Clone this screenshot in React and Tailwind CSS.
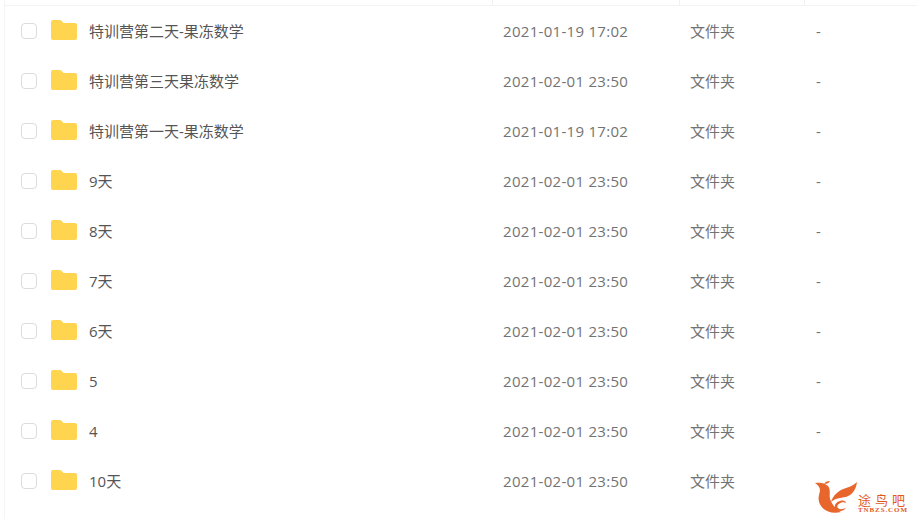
const ROWS = [
  { name: "特训营第二天-果冻数学", time: "2021-01-19 17:02" },
  { name: "特训营第三天果冻数学", time: "2021-02-01 23:50" },
  { name: "特训营第一天-果冻数学", time: "2021-01-19 17:02" },
  { name: "9天", time: "2021-02-01 23:50" },
  { name: "8天", time: "2021-02-01 23:50" },
  { name: "7天", time: "2021-02-01 23:50" },
  { name: "6天", time: "2021-02-01 23:50" },
  { name: "5", time: "2021-02-01 23:50" },
  { name: "4", time: "2021-02-01 23:50" },
  { name: "10天", time: "2021-02-01 23:50" },
];

function FolderIcon() {
  return (
    <svg width="26" height="20" viewBox="0 0 26 20" className="shrink-0">
      <path d="M0 2a2 2 0 0 1 2-2h6.5c1 0 1.6.4 2.2 1.1L12.5 3H24a2 2 0 0 1 2 2v13a2 2 0 0 1-2 2H2a2 2 0 0 1-2-2z" fill="#ffd44f" />
    </svg>
  );
}

// watermark sits over the table's last row, white patch hides what is under it
function Logo() {
  return (
    <div className="absolute left-[810px] top-[470px] flex h-[49px] w-[107px] items-start bg-white pt-[8px]">
      <svg width="48" height="40" viewBox="0 0 48 40" className="shrink-0">
        <path d="M5 5c5-1 10 0 13 3 3 4 1 8 2 13 2 6 6 10 11 13-8 2-16 0-20-6-4-6-2-11-1-15C10 9 8 7 5 5z" fill="#e8652c" />
        <path d="M14 6c1-2 3-3 6-3-1 2-3 3-6 3z" fill="#e8652c" />
        <path d="M21 24c2-7 8-12 15-14 4-1 8-3 11-6-1 8-5 13-11 15-6 1-11 1-15 5z" fill="#e8652c" />
        <path d="M36 30c-3 4-9 4-11 0-1-3 1-6 5-7 3-1 6 0 6 2-2-1-5-1-7 1-2 1-2 3-1 4 2 2 5 1 8 0z" fill="#e8652c" />
      </svg>
      <div className="mt-[15px] flex flex-col text-[#e2591f]">
        <span className="h-[13px] text-[13px] leading-[13px] tracking-[4px] font-['Noto_Sans_CJK_SC',sans-serif]">途鸟吧</span>
        <span className="mt-[1px] h-[6px] text-[7px] leading-[6px] font-bold tracking-[0.9px] font-['Liberation_Serif',serif]">TNBZS.COM</span>
      </div>
    </div>
  );
}

export default function App() {
  return (
    <div className="relative h-[519px] w-[917px] overflow-hidden bg-white font-['Open_Sans','Noto_Sans_CJK_SC',sans-serif] text-[15px] text-[#666]">
      <div className="ml-[4px] h-full border-l border-[#f5f5f5]">
        <div className="flex h-[6px] border-b border-[#f3f3f3]">
          <div className="w-[488px] border-r border-[#f0f0f0]" />
          <div className="w-[187px] border-r border-[#f0f0f0]" />
          <div className="w-[125px] border-r border-[#f0f0f0]" />
        </div>
        {ROWS.map((row) => (
          <div key={row.name} className="flex h-[50px] items-center pb-[2px]">
            <div className="flex w-[498px] items-center">
              <div className="ml-[16px] mt-[2px] h-[16px] w-[16px] rounded-[4px] border border-[#dcdcdc] bg-white" />
              <div className="ml-[14px]"><FolderIcon /></div>
              <span className="ml-[12px] pt-[2px] text-[#555]">{row.name}</span>
            </div>
            <span className="w-[187px] pt-[2px] tracking-[0.3px] text-[#737373]">{row.time}</span>
            <span className="w-[126px] pt-[2px] text-[#737373]">文件夹</span>
            <span className="pt-[2px] text-[#737373]">-</span>
          </div>
        ))}
      </div>
      <Logo />
    </div>
  );
}
